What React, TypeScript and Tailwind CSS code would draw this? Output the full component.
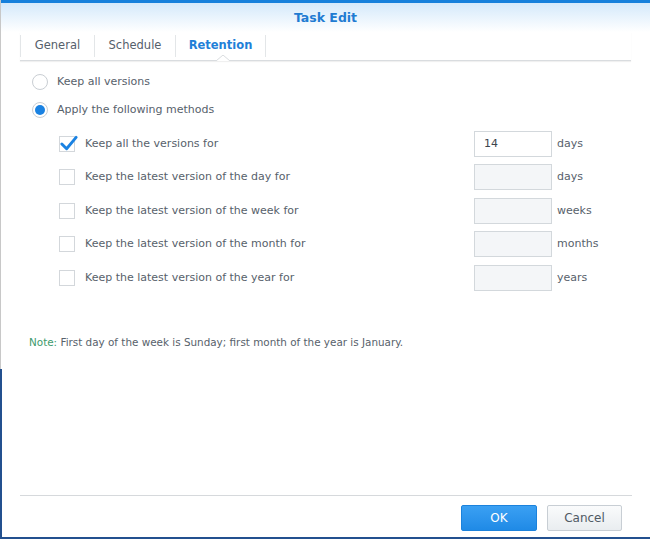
import React from 'react';

const font = { fontFamily: '"DejaVu Sans", Verdana, sans-serif' };

function Radio({ checked }: { checked?: boolean }) {
  return (
    <span className="flex h-[16px] w-[16px] items-center justify-center rounded-full border border-[#c9ced3] bg-white">
      {checked && <span className="h-[10px] w-[10px] rounded-full bg-[#1a82e2]" />}
    </span>
  );
}

function Check({ checked }: { checked?: boolean }) {
  return (
    <span className="relative block h-[16px] w-[16px] border border-[#d3d7db] bg-white">
      {checked && (
        <svg viewBox="0 0 20 20" className="absolute -left-[1px] -top-[3px] h-[19px] w-[19px]">
          <path d="M3 10.5 L8 15.5 L18 3.5" fill="none" stroke="#1a82e2" strokeWidth="3" strokeLinecap="round" strokeLinejoin="round" />
        </svg>
      )}
    </span>
  );
}

const rows = [
  { label: 'Keep all the versions for', unit: 'days', value: '14', checked: true },
  { label: 'Keep the latest version of the day for', unit: 'days', value: '' },
  { label: 'Keep the latest version of the week for', unit: 'weeks', value: '' },
  { label: 'Keep the latest version of the month for', unit: 'months', value: '' },
  { label: 'Keep the latest version of the year for', unit: 'years', value: '' },
];

function App() {
  return (
    <div className="flex h-[539px] w-[650px] flex-col overflow-hidden bg-white text-[11px] text-[#57616b]" style={font}>
      <div className="flex h-[369px] flex-col border-l border-[#c8c8c8]">
        {/* title bar */}
        <div className="flex h-[32px] items-center justify-center border-t-[3px] border-[#1680dc] bg-gradient-to-b from-[#d4e9fb] to-white pt-[2px]">
          <span className="text-[12.5px] font-bold text-[#1f7bd2]">Task Edit</span>
        </div>

        {/* tabs */}
        <div className="mx-[19px] flex h-[29px] items-stretch border-b border-[#d9dcdf] shadow-[0_1px_1px_rgba(0,0,0,0.06)]">
          <div className="my-[3px] flex w-[74px] items-center justify-center border-l border-[#e3e6e8] text-[11.5px] text-[#55606b]">General</div>
          <div className="my-[3px] flex w-[81px] items-center justify-center border-l border-[#e3e6e8] text-[11.5px] text-[#55606b]">Schedule</div>
          <div className="relative my-[3px] flex w-[91px] items-center justify-center border-x border-[#e3e6e8] text-[11.5px] font-bold text-[#1f80d8]">
            Retention
            <svg viewBox="0 0 14 6" className="absolute -bottom-[4px] left-[40px] h-[6px] w-[14px]">
              <path d="M0 6 L7 0 L14 6 Z" fill="white" />
              <path d="M0 6 L7 0 L14 6" fill="none" stroke="#d9dcdf" strokeWidth="1" />
            </svg>
          </div>
        </div>

        {/* content */}
        <div className="flex flex-col pl-[31px] pt-[12px]">
          <div className="flex h-[18px] items-center gap-[9px]">
            <Radio />
            <span>Keep all versions</span>
          </div>
          <div className="mt-[10px] flex h-[18px] items-center gap-[9px]">
            <Radio checked />
            <span>Apply the following methods</span>
          </div>

          <div className="mt-[8px] flex flex-col pl-[27px]">
            {rows.map((r) => (
              <div key={r.unit + r.label} className="flex h-[33.5px] items-center">
                <Check checked={r.checked} />
                <span className="ml-[10px] w-[389px]">{r.label}</span>
                <div
                  className={
                    r.value
                      ? 'flex h-[26px] w-[78px] items-center border border-[#d3d8dc] bg-white pl-[9px] text-[#3d454d]'
                      : 'h-[26px] w-[78px] border border-[#d3d8dc] bg-[#f4f6f8]'
                  }
                >
                  {r.value}
                </div>
                <span className="ml-[5px]">{r.unit}</span>
              </div>
            ))}
          </div>

          <div className="-ml-[3px] mt-[40px] text-[10.4px]">
            <span className="text-[#3e9a6c]">Note:</span> First day of the week is Sunday; first month of the year is January.
          </div>
        </div>
      </div>

      {/* lower area */}
      <div className="flex flex-1 flex-col border-b-2 border-l-2 border-[#23508f]">
        <div className="flex-1" />
        <div className="mx-[18px] border-t border-[#d6d9dc]" />
        <div className="flex h-[41px] items-start justify-end gap-[10px] pr-[28px] pt-[9px]">
          <button className="h-[26px] w-[76px] rounded-[2px] border border-[#1b82dc] bg-gradient-to-b from-[#3aa0f3] to-[#1f8ae6] text-[12px] text-white">
            OK
          </button>
          <button className="h-[26px] w-[75px] rounded-[2px] border border-[#c8ced4] bg-gradient-to-b from-[#fafbfc] to-[#e9edf0] text-[12px] text-[#505a64]">
            Cancel
          </button>
        </div>
      </div>
    </div>
  );
}

export default App;
